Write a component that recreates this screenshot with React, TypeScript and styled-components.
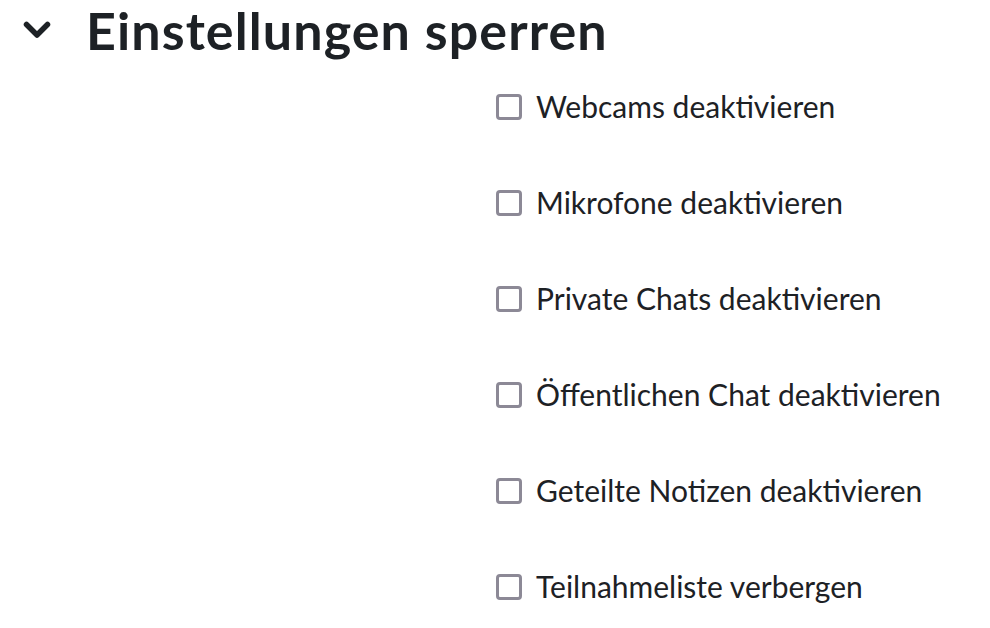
import styled, { createGlobalStyle } from 'styled-components';

const GlobalStyle = createGlobalStyle`
  html, body {
    margin: 0;
    padding: 0;
    background: #ffffff;
  }
  body {
    font-family: Lato, 'Noto Sans', 'Liberation Sans', sans-serif;
    color: #1d2125;
  }
`;

const Fieldset = styled.section`
  width: 990px;
  height: 628px;
  overflow: hidden;
`;

const Legend = styled.div`
  display: flex;
  align-items: center;
  height: 60px;
  padding-left: 22px;
`;

const Toggle = styled.button`
  display: flex;
  align-items: center;
  justify-content: center;
  width: 30px;
  height: 30px;
  padding: 0;
  margin-right: 34px;
  border: 0;
  background: none;
  color: #1d2125;
`;

const Heading = styled.h3`
  margin: 0;
  font-size: 52px;
  font-weight: 700;
  letter-spacing: 1.1px;
  line-height: 60px;
`;

const Options = styled.div`
  display: flex;
  flex-direction: column;
  padding: 0 0 0 496px;
`;

const Option = styled.label`
  display: flex;
  align-items: center;
  height: 96px;
  gap: 14px;
  font-size: 30px;
  &:first-child {
    margin-top: -2px;
  }
`;

const Box = styled.input.attrs({ type: 'checkbox' })`
  appearance: none;
  box-sizing: border-box;
  flex: none;
  width: 26px;
  height: 26px;
  margin: 2px 0 0;
  border: 3px solid #8c8996;
  border-radius: 4px;
  background: #fff;
`;

const options = [
  'Webcams deaktivieren',
  'Mikrofone deaktivieren',
  'Private Chats deaktivieren',
  'Öffentlichen Chat deaktivieren',
  'Geteilte Notizen deaktivieren',
  'Teilnahmeliste verbergen',
];

export default function App() {
  return (
    <>
      <GlobalStyle />
      <Fieldset>
        <Legend>
          <Toggle aria-expanded="true">
            <svg width="28" height="18" viewBox="0 0 28 18" fill="none">
              <path
                d="M3.5 3.5 L14 14 L24.5 3.5"
                stroke="currentColor"
                strokeWidth="5.5"
                strokeLinecap="round"
                strokeLinejoin="round"
              />
            </svg>
          </Toggle>
          <Heading>Einstellungen sperren</Heading>
        </Legend>
        <Options>
          {options.map((text) => (
            <Option key={text}>
              <Box />
              <span>{text}</span>
            </Option>
          ))}
        </Options>
      </Fieldset>
    </>
  );
}
